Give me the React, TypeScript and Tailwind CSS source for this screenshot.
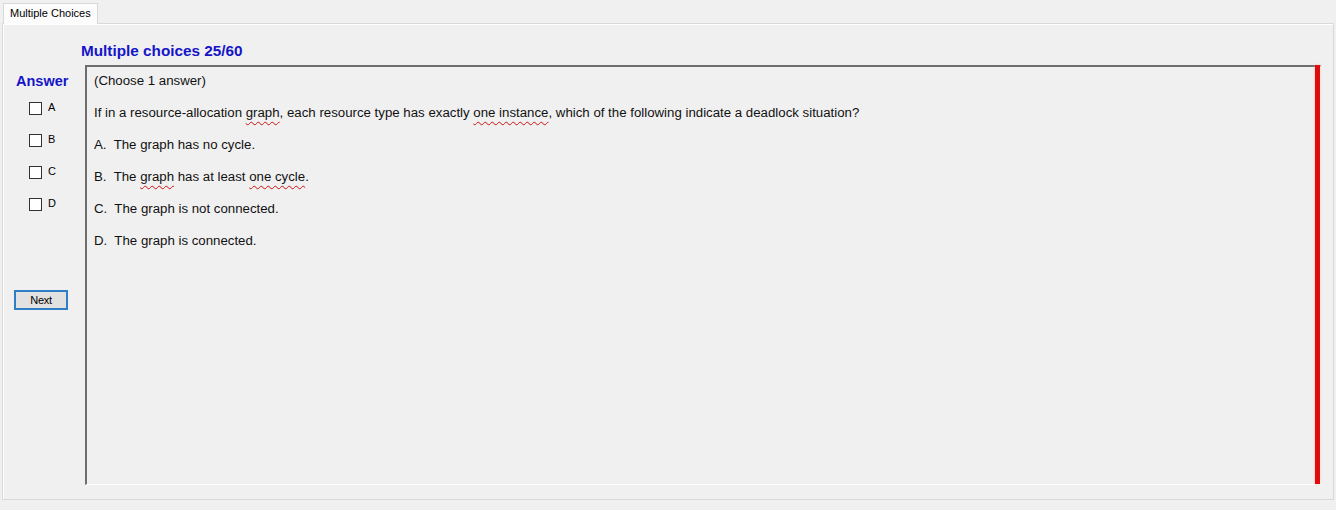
import { FC, ReactNode } from 'react'

const Squiggle: FC<{ children: ReactNode }> = ({ children }) => (
  <span className="underline decoration-wavy decoration-[#d01010] decoration-1 underline-offset-[4px]">
    {children}
  </span>
)

const options = ['A', 'B', 'C', 'D']

const App: FC = () => {
  return (
    <div
      className="w-[1336px] h-[510px] bg-[#f0f0f0] text-black overflow-hidden"
      style={{ fontFamily: '"Liberation Sans", Arial, sans-serif' }}
    >
      {/* Tab strip */}
      <div className="h-[23px] pl-[3px] pt-[3px] flex">
        <div className="h-[21px] px-[6px] bg-[#fcfcfc] border border-b-0 border-[#d9d9d9] text-[11px] leading-[19px] text-black">
          Multiple Choices
        </div>
      </div>

      {/* Tab page */}
      <div className="mx-[2px] h-[477px] border border-[#d9d9d9] bg-[#f0f0f0] shadow-[inset_1px_1px_0_#ffffff]">
        <div className="pt-[18px] pl-[78px] h-[41px] text-[15.3px] leading-[18px] font-bold text-[#1515c8]">
          Multiple choices 25/60
        </div>

        <div className="flex">
          {/* Answer column */}
          <div className="w-[82px] shrink-0 flex flex-col">
            <div className="pl-[13px] pt-[7px] text-[14.5px] leading-[18px] font-bold text-[#1515c8]">
              Answer
            </div>
            <div className="mt-[12px] flex flex-col gap-[19px] pl-[26px]">
              {options.map((o) => (
                <label key={o} className="flex items-center h-[13px]">
                  <span className="w-[13px] h-[13px] border border-[#333333] bg-white" />
                  <span className="ml-[6px] text-[11px] leading-[13px] -mt-[3px]">{o}</span>
                </label>
              ))}
            </div>
            <button
              type="button"
              className="mt-[79px] ml-[11px] w-[54px] h-[20px] border-2 border-[#2f7ec7] bg-[#e1e1e1] text-[11px] leading-[14px] tracking-[-0.3px]"
            >
              Next
            </button>
          </div>

          {/* Question box */}
          <div className="relative w-[1236px] h-[420px] border-l-2 border-t-2 border-l-[#6e6e6e] border-t-[#6e6e6e] border-r border-b border-r-[#ffffff] border-b-[#ffffff] bg-[#f0f0f0]">
            <div className="pt-[6px] pl-[7px] pr-[12px] flex flex-col gap-[17px] text-[13.25px] leading-[15px] text-[#111111]">
              <div>(Choose 1 answer)</div>
              <div>
                If in a resource-allocation <Squiggle>graph</Squiggle>, each resource type has exactly{' '}
                <Squiggle>one instance</Squiggle>, which of the following indicate a deadlock situation?
              </div>
              <div>A.&nbsp; The graph has no cycle.</div>
              <div>
                B.&nbsp; The <Squiggle>graph</Squiggle> has at least <Squiggle>one cycle</Squiggle>.
              </div>
              <div>C.&nbsp; The graph is not connected.</div>
              <div>D.&nbsp; The graph is connected.</div>
            </div>
            {/* red marker bar */}
            <div className="absolute right-[0px] top-[-2px] bottom-0 w-[5px] bg-[#e00c0c] shadow-[0_0_2px_#f5a0a0]" />
          </div>
        </div>
      </div>
    </div>
  )
}

export default App
